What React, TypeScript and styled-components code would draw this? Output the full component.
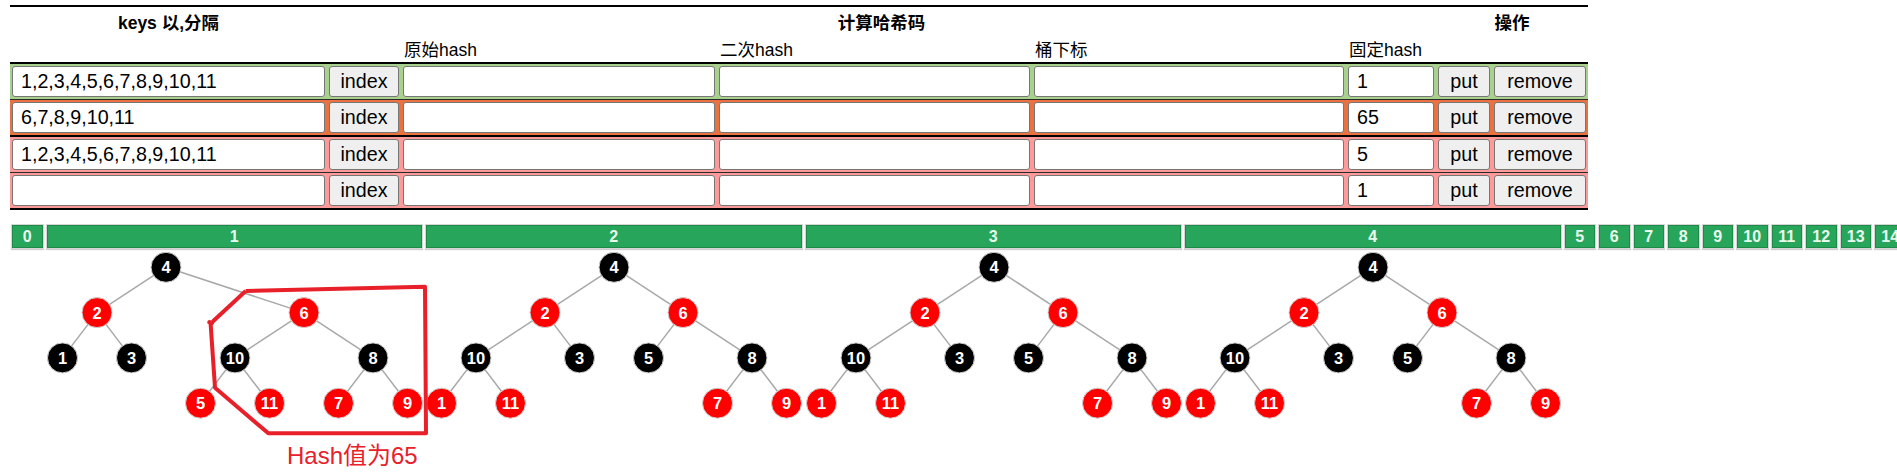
import React from "react";
import styled, { createGlobalStyle } from "styled-components";

const GlobalStyle = createGlobalStyle`
  html { overflow: hidden; }
  body { margin: 0; padding: 0; background: #fff; font-family: "Liberation Sans", "Noto Sans CJK SC", sans-serif; color: #000; }
`;

const COLS = "313px 70px 312px 311px 310px 86px 52px 92px";

const Page = styled.div`
  box-sizing: border-box;
  min-height: 476px;
  padding: 5px 0 0 10px;
`;

const Table = styled.div`
  width: 1578px;
  border-top: 2px solid #000;
`;

const HeadRow = styled.div<{ $h: number }>`
  display: grid;
  grid-template-columns: ${COLS};
  column-gap: 4px;
  padding: 0 2px;
  height: ${(p) => p.$h}px;
  align-items: center;
`;

const GroupTitle = styled.div<{ $col: string }>`
  grid-column: ${(p) => p.$col};
  text-align: center;
  font-weight: bold;
  font-size: 17.5px;
  line-height: 20px;
`;

const SubTitle = styled.div<{ $col: number }>`
  grid-column: ${(p) => p.$col};
  font-size: 17.5px;
  line-height: 20px;
  padding-left: 1px;
`;

const Body = styled.div`
  border-top: 2px solid #000;
  border-bottom: 2px solid #000;
`;

const TONES: Record<string, string> = {
  green: "#a9d18e",
  orange: "#ea7240",
  pink: "#ff9a9a",
};

const Row = styled.div<{ $tone: string; $sep: number }>`
  display: grid;
  grid-template-columns: ${COLS};
  column-gap: 4px;
  padding: 2px 2px;
  background: ${(p) => TONES[p.$tone]};
  border-bottom: ${(p) => (p.$sep ? `${p.$sep}px solid ${p.$sep > 1 ? "#000" : "#2a2a2a"}` : "none")};
`;

const Field = styled.input`
  box-sizing: border-box;
  height: 31px;
  width: 100%;
  margin: 0;
  border: 1px solid #767676;
  border-radius: 3px;
  background: #fff;
  padding: 0 7px 0 8px;
  font-family: "Liberation Sans", "Noto Sans CJK SC", sans-serif;
  font-size: 19.7px;
  color: #000;
  outline: none;
`;

const Btn = styled.button`
  box-sizing: border-box;
  height: 31px;
  width: 100%;
  margin: 0;
  padding: 0;
  border: 1px solid #767676;
  border-radius: 3px;
  background: #efefef;
  font-family: "Liberation Sans", "Noto Sans CJK SC", sans-serif;
  font-size: 19.7px;
  color: #000;
`;

const BucketArea = styled.div`
  position: relative;
  margin-top: 15px;
  padding-left: 2px;
  display: flex;
  align-items: flex-start;
`;

const Column = styled.div<{ $w: number }>`
  flex: 0 0 auto;
  width: ${(p) => p.$w}px;
  display: flex;
  flex-direction: column;
`;

const BucketBox = styled.div`
  box-sizing: border-box;
  width: calc(100% - 4px);
  height: 23px;
  background: #27a55a;
  border: 1px solid #1e8a48;
  box-shadow: 0 0 0 1px #d6d6d6, 0 1px 1px 1px #cfcfcf;
  color: #e9fbef;
  font-weight: bold;
  font-size: 16px;
  line-height: 21px;
  text-align: center;
`;

const TreeSvg = styled.svg`
  display: block;
  overflow: visible;
`;

const Overlay = styled.svg`
  position: absolute;
  left: 0;
  top: 0;
  pointer-events: none;
  overflow: visible;
`;

const Note = styled.div`
  position: absolute;
  left: 277px;
  top: 219px;
  font-size: 24px;
  line-height: 24px;
  color: #e8202a;
  white-space: nowrap;
  font-family: "Liberation Sans", "Noto Sans CJK SC", sans-serif;
`;

type N = { v: string; red: boolean; k: number; d: number };
type Tree = { nodes: N[]; edges: [string, string][] };

const treeA: Tree = {
  nodes: [
    { v: "4", red: false, k: 3, d: 0 },
    { v: "2", red: true, k: 1, d: 1 },
    { v: "6", red: true, k: 7, d: 1 },
    { v: "1", red: false, k: 0, d: 2 },
    { v: "3", red: false, k: 2, d: 2 },
    { v: "10", red: false, k: 5, d: 2 },
    { v: "8", red: false, k: 9, d: 2 },
    { v: "5", red: true, k: 4, d: 3 },
    { v: "11", red: true, k: 6, d: 3 },
    { v: "7", red: true, k: 8, d: 3 },
    { v: "9", red: true, k: 10, d: 3 },
  ],
  edges: [
    ["4", "2"], ["4", "6"], ["2", "1"], ["2", "3"], ["6", "10"], ["6", "8"],
    ["10", "5"], ["10", "11"], ["8", "7"], ["8", "9"],
  ],
};

const treeB: Tree = {
  nodes: [
    { v: "4", red: false, k: 5, d: 0 },
    { v: "2", red: true, k: 3, d: 1 },
    { v: "6", red: true, k: 7, d: 1 },
    { v: "10", red: false, k: 1, d: 2 },
    { v: "3", red: false, k: 4, d: 2 },
    { v: "5", red: false, k: 6, d: 2 },
    { v: "8", red: false, k: 9, d: 2 },
    { v: "1", red: true, k: 0, d: 3 },
    { v: "11", red: true, k: 2, d: 3 },
    { v: "7", red: true, k: 8, d: 3 },
    { v: "9", red: true, k: 10, d: 3 },
  ],
  edges: [
    ["4", "2"], ["4", "6"], ["2", "10"], ["2", "3"], ["6", "5"], ["6", "8"],
    ["10", "1"], ["10", "11"], ["8", "7"], ["8", "9"],
  ],
};

const PITCH = 34.5;
const px = (k: number) => 15.5 + PITCH * k;
const py = (d: number) => 19.3 + 45.3 * d;

const TreeView: React.FC<{ tree: Tree; width: number }> = ({ tree, width }) => {
  const map: Record<string, N> = {};
  tree.nodes.forEach((n) => (map[n.v] = n));
  return (
    <TreeSvg width={width} height={200}>
      {tree.edges.map(([a, b]) => (
        <line
          key={a + "-" + b}
          x1={px(map[a].k)}
          y1={py(map[a].d)}
          x2={px(map[b].k)}
          y2={py(map[b].d)}
          stroke="#a8a8a8"
          strokeWidth={1.5}
        />
      ))}
      {tree.nodes.map((n) => (
        <g key={n.v}>
          <circle
            cx={px(n.k)}
            cy={py(n.d)}
            r={15}
            fill={n.red ? "#ff0000" : "#000"}
            stroke="#d0d0d0"
            strokeWidth={1}
          />
          <text
            x={px(n.k)}
            y={py(n.d)}
            dy="0.36em"
            textAnchor="middle"
            fill="#fff"
            fontWeight="bold"
            fontSize={16.5}
            fontFamily="Liberation Sans, sans-serif"
          >
            {n.v}
          </text>
        </g>
      ))}
    </TreeSvg>
  );
};

const rows = [
  { tone: "green", keys: "1,2,3,4,5,6,7,8,9,10,11", fixed: "1", sep: 1 },
  { tone: "orange", keys: "6,7,8,9,10,11", fixed: "65", sep: 2 },
  { tone: "pink", keys: "1,2,3,4,5,6,7,8,9,10,11", fixed: "5", sep: 1 },
  { tone: "pink", keys: "", fixed: "1", sep: 0 },
];

const buckets: { label: string; tree?: Tree }[] = [
  { label: "0" },
  { label: "1", tree: treeA },
  { label: "2", tree: treeB },
  { label: "3", tree: treeB },
  { label: "4", tree: treeB },
  ...Array.from({ length: 11 }, (_, i) => ({ label: String(i + 5) })),
];

export default function App() {
  return (
    <>
      <GlobalStyle />
      <Page>
        <Table>
          <HeadRow $h={31}>
            <GroupTitle $col="1">keys 以,分隔</GroupTitle>
            <GroupTitle $col="2 / 7">计算哈希码</GroupTitle>
            <GroupTitle $col="7 / 9">操作</GroupTitle>
          </HeadRow>
          <HeadRow $h={24}>
            <SubTitle $col={3}>原始hash</SubTitle>
            <SubTitle $col={4}>二次hash</SubTitle>
            <SubTitle $col={5}>桶下标</SubTitle>
            <SubTitle $col={6}>固定hash</SubTitle>
          </HeadRow>
          <Body>
            {rows.map((r, i) => (
              <Row key={i} $tone={r.tone} $sep={r.sep}>
                <Field defaultValue={r.keys} />
                <Btn>index</Btn>
                <Field defaultValue="" />
                <Field defaultValue="" />
                <Field defaultValue="" />
                <Field defaultValue={r.fixed} />
                <Btn>put</Btn>
                <Btn>remove</Btn>
              </Row>
            ))}
          </Body>
        </Table>
        <BucketArea>
          {buckets.map((b) => {
            const w = b.tree ? PITCH * 11 : PITCH;
            return (
              <Column key={b.label} $w={w}>
                <BucketBox>{b.label}</BucketBox>
                {b.tree && <TreeView tree={b.tree} width={w} />}
              </Column>
            );
          })}
          <Overlay width={500} height={250}>
            <polyline
              points="235.7,66 415,61.7 416,208.3 258.3,208.3 205,162.7 200.7,100 203.3,96 235.7,66"
              fill="none"
              stroke="#e8202a"
              strokeWidth={4}
              strokeLinejoin="round"
            />
            <circle cx={199.5} cy={97.3} r={2.2} fill="#e8202a" />
          </Overlay>
          <Note>Hash值为65</Note>
        </BucketArea>
      </Page>
    </>
  );
}
